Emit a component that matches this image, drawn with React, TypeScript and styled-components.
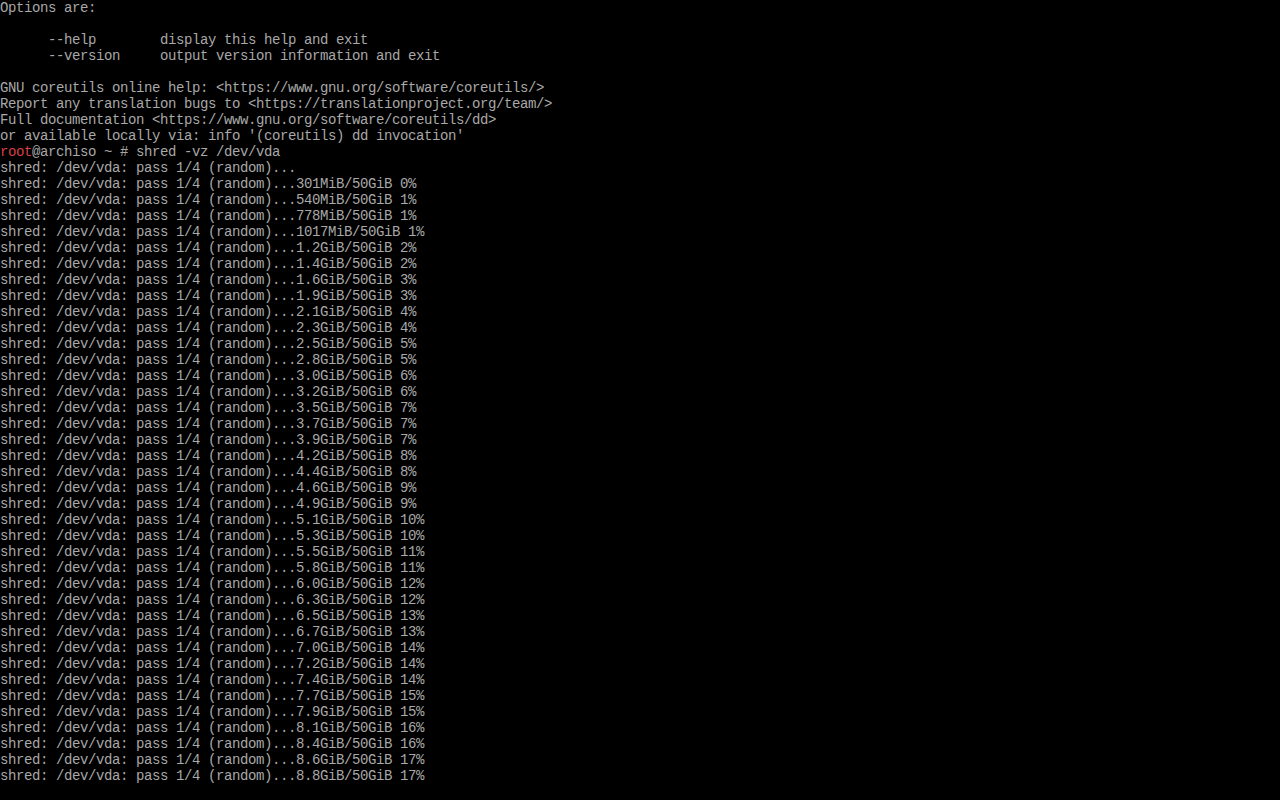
import React from "react";
import styled, { createGlobalStyle } from "styled-components";

const Global = createGlobalStyle`
  html, body {
    margin: 0;
    padding: 0;
    background: #000;
  }
  #root {
    background: #000;
  }
`;

const Screen = styled.main`
  width: 1280px;
  height: 800px;
  overflow: hidden;
  background: #000;
  display: flex;
  flex-direction: column;
  font-family: "Liberation Mono", "DejaVu Sans Mono", monospace;
  font-size: 14px;
  letter-spacing: -0.4px;
  color: #a8a8a8;
`;

const Line = styled.div`
  height: 16px;
  line-height: 16px;
  white-space: pre;
  flex: none;
`;

const User = styled.span`
  color: #d8414a;
`;

const progress: [string, string][] = [
  ["301MiB", "0"],
  ["540MiB", "1"],
  ["778MiB", "1"],
  ["1017MiB", "1"],
  ["1.2GiB", "2"],
  ["1.4GiB", "2"],
  ["1.6GiB", "3"],
  ["1.9GiB", "3"],
  ["2.1GiB", "4"],
  ["2.3GiB", "4"],
  ["2.5GiB", "5"],
  ["2.8GiB", "5"],
  ["3.0GiB", "6"],
  ["3.2GiB", "6"],
  ["3.5GiB", "7"],
  ["3.7GiB", "7"],
  ["3.9GiB", "7"],
  ["4.2GiB", "8"],
  ["4.4GiB", "8"],
  ["4.6GiB", "9"],
  ["4.9GiB", "9"],
  ["5.1GiB", "10"],
  ["5.3GiB", "10"],
  ["5.5GiB", "11"],
  ["5.8GiB", "11"],
  ["6.0GiB", "12"],
  ["6.3GiB", "12"],
  ["6.5GiB", "13"],
  ["6.7GiB", "13"],
  ["7.0GiB", "14"],
  ["7.2GiB", "14"],
  ["7.4GiB", "14"],
  ["7.7GiB", "15"],
  ["7.9GiB", "15"],
  ["8.1GiB", "16"],
  ["8.4GiB", "16"],
  ["8.6GiB", "17"],
  ["8.8GiB", "17"],
];

const header = [
  "Options are:",
  "",
  "      --help        display this help and exit",
  "      --version     output version information and exit",
  "",
  "GNU coreutils online help: <https://www.gnu.org/software/coreutils/>",
  "Report any translation bugs to <https://translationproject.org/team/>",
  "Full documentation <https://www.gnu.org/software/coreutils/dd>",
  "or available locally via: info '(coreutils) dd invocation'",
];

const prefix = "shred: /dev/vda: pass 1/4 (random)...";

export default function App() {
  return (
    <>
      <Global />
      <Screen>
        {header.map((t, i) => (
          <Line key={"h" + i}>{t || " "}</Line>
        ))}
        <Line>
          <User>root</User>@archiso ~ # shred -vz /dev/vda
        </Line>
        <Line>{prefix}</Line>
        {progress.map(([amt, pct], i) => (
          <Line key={"p" + i}>{`${prefix}${amt}/50GiB ${pct}%`}</Line>
        ))}
      </Screen>
    </>
  );
}
